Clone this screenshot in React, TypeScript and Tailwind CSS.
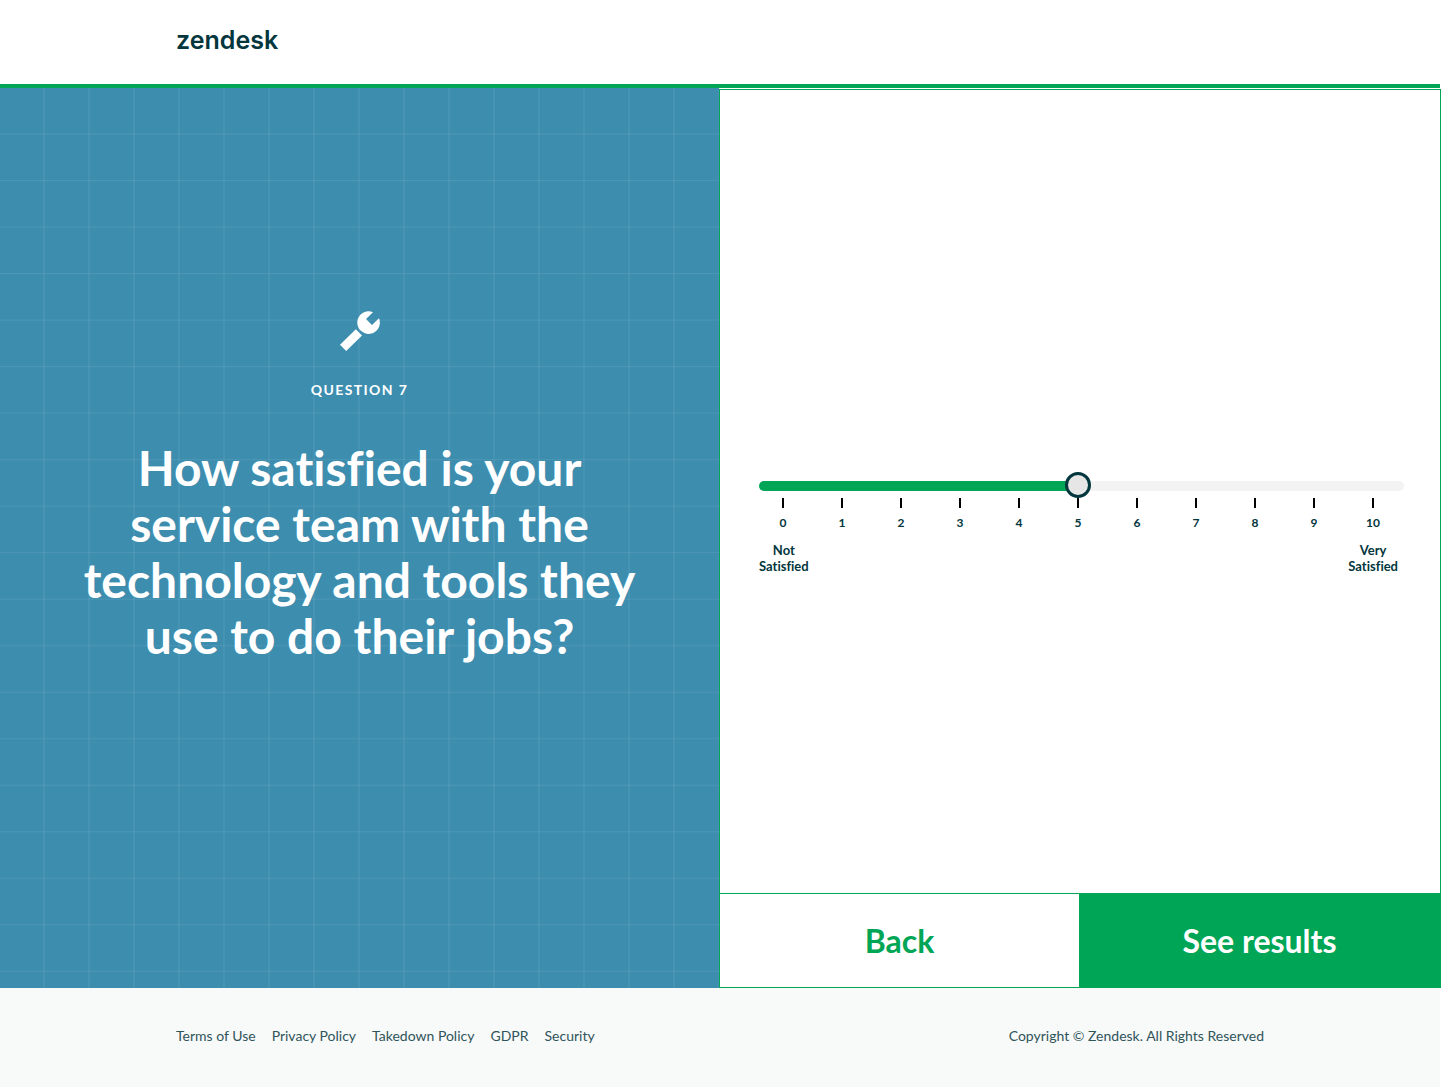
import React, { useState } from 'react';

const MAX_SCORE = 10;
const scores = Array.from({ length: MAX_SCORE + 1 }, (_, i) => i);

const footerLinks = [
  'Terms of Use',
  'Privacy Policy',
  'Takedown Policy',
  'GDPR',
  'Security',
];

function WrenchIcon() {
  return (
    <svg
      viewBox="0 0 40 40"
      className="h-10 w-10"
      fill="currentColor"
      aria-hidden="true"
    >
      <path d="M33 1.2 L26 8 L32 14 L39 7.2 A11.3 11.3 0 1 1 33 1.2 Z" />
      <path d="M15.8 18.3 L22 24.6 L6.2 40 L0 33.8 Z" />
    </svg>
  );
}

function Header() {
  return (
    <header className="mr-px flex h-[88px] items-start border-b-4 border-[#00a656] px-44 pt-[22px]">
      <a
        href="#home"
        className="font-['Inter',sans-serif] text-[25px] leading-9 font-semibold text-[#03363d]"
      >
        zendesk
      </a>
    </header>
  );
}

function QuestionPanel() {
  return (
    <section className="flex flex-col items-center bg-[#3d8daf] bg-[linear-gradient(to_left,rgba(255,255,255,0.05)_2px,transparent_2px),linear-gradient(to_top,rgba(255,255,255,0.08)_1px,transparent_1px)] bg-[length:45px_5.17%] px-20 pt-[223px] text-center text-white">
      <WrenchIcon />
      <p className="mt-[27px] text-sm leading-6 font-bold tracking-widest">
        QUESTION 7
      </p>
      <h1 className="mt-[38px] max-w-[560px] text-5xl leading-14 font-bold [font-variant-ligatures:none]">
        How satisfied is your service team with the technology and tools they
        use to do their jobs?
      </h1>
    </section>
  );
}

function SatisfactionSlider() {
  const [score, setScore] = useState(5);

  return (
    <div className="pr-9 pl-[39px]">
      <div className="relative pr-[18px] pl-[11px]">
        {/* track */}
        <div className="absolute inset-x-0 top-[9px] h-[10px] overflow-hidden rounded-full bg-[#f3f3f3]">
          <div
            className="h-full bg-[#00a656]"
            style={{
              width: `calc(24px + (100% - 55px) * ${score / MAX_SCORE})`,
            }}
          />
        </div>
        <input
          type="range"
          min={0}
          max={MAX_SCORE}
          value={score}
          onChange={(e) => setScore(Number(e.target.value))}
          aria-label="Satisfaction score"
          className="relative z-10 block h-[26px] w-full cursor-pointer appearance-none bg-transparent [&::-moz-range-thumb]:box-border [&::-moz-range-thumb]:size-[26px] [&::-moz-range-thumb]:rounded-full [&::-moz-range-thumb]:border-3 [&::-moz-range-thumb]:border-[#03363d] [&::-moz-range-thumb]:bg-[#e6e6e6] [&::-webkit-slider-thumb]:size-[26px] [&::-webkit-slider-thumb]:appearance-none [&::-webkit-slider-thumb]:rounded-full [&::-webkit-slider-thumb]:border-3 [&::-webkit-slider-thumb]:border-solid [&::-webkit-slider-thumb]:border-[#03363d] [&::-webkit-slider-thumb]:bg-[#e6e6e6]"
        />
        <div className="flex justify-between">
          {scores.map((n) => (
            <div key={n} className="flex w-[26px] flex-col items-center">
              <span className="h-[10px] w-[2px] bg-black" />
              <span className="mt-[7px] text-xs leading-4 font-bold text-[#03363d]">
                {n}
              </span>
            </div>
          ))}
        </div>
      </div>
      <div className="mt-[11px] flex justify-between pr-[6px] text-center text-[13px] leading-4 font-bold text-[#03363d] [font-variant-ligatures:none]">
        <p>
          Not
          <br />
          Satisfied
        </p>
        <p>
          Very
          <br />
          Satisfied
        </p>
      </div>
    </div>
  );
}

function AnswerPanel() {
  return (
    <section className="mt-px flex flex-col border border-[#00a656] bg-white">
      <div className="flex flex-1 flex-col pt-[382px]">
        <SatisfactionSlider />
      </div>
      <div className="grid grid-cols-[359fr_361fr] border-t border-[#00a656] text-[32px] leading-[93px] font-bold">
        <button type="button" className="cursor-pointer text-[#00a656]">
          Back
        </button>
        <button
          type="button"
          className="cursor-pointer bg-[#00a656] text-white"
        >
          See results
        </button>
      </div>
    </section>
  );
}

function Footer() {
  return (
    <footer className="mr-px flex items-start justify-between bg-[#f8f9f9] px-44 pt-[38px] pb-[41px] text-sm leading-5 text-[#2f5459]">
      <nav className="flex gap-4">
        {footerLinks.map((label) => (
          <a
            key={label}
            href={`#${label.toLowerCase().replace(/ /g, '-')}`}
            className="hover:underline"
          >
            {label}
          </a>
        ))}
      </nav>
      <p>Copyright © Zendesk. All Rights Reserved</p>
    </footer>
  );
}

export default function App() {
  return (
    <div className="flex min-h-screen flex-col bg-white font-['Lato',sans-serif]">
      <Header />
      <main className="grid flex-1 grid-cols-[719fr_722fr]">
        <QuestionPanel />
        <AnswerPanel />
      </main>
      <Footer />
    </div>
  );
}
